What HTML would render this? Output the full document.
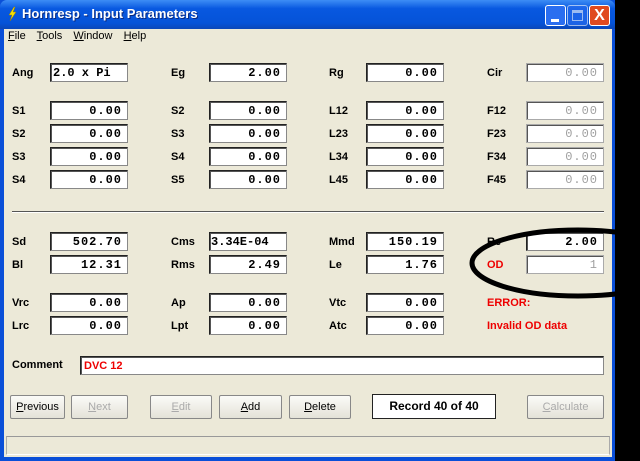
<!DOCTYPE html><html><head><style>
*{margin:0;padding:0;box-sizing:border-box}
body{width:640px;height:461px;background:#000;position:relative;overflow:hidden;font-family:"Liberation Sans",sans-serif}
.win{position:absolute;left:0;top:0;width:615px;height:461px;background:#0a4fd8;}
.title{position:absolute;left:0;top:0;width:615px;height:29px;background:linear-gradient(#3d8df5,#0858e0 30%,#0553d8 80%,#0a47b8);border-radius:7px 7px 0 0}
.title span{position:absolute;left:22px;top:6px;color:#fff;font-weight:bold;font-size:13px;text-shadow:1px 1px #0a2a80}
.body{position:absolute;left:4px;top:29px;width:608px;height:428px;background:#ece9d8}
.menu{position:absolute;left:8px;top:30px;font-size:11px}
.menu span{margin-right:8px}
.l{position:absolute;font-weight:bold;font-size:11px;color:#000;white-space:nowrap}
.b{position:absolute;width:78px;height:19px;background:#fff;border:1px solid #222;border-right-color:#888;border-bottom-color:#888;box-shadow:inset 1px 1px #555;font-family:"Liberation Mono",monospace;font-weight:bold;font-size:12px;text-align:right;padding:1px 5px 0 0;letter-spacing:1px;line-height:16px;white-space:nowrap;overflow:hidden}
.g{color:#a0a0a0;font-weight:normal;border-color:#aaa}
.btn{position:absolute;top:395px;height:24px;border:1px solid #888;border-radius:2px;background:linear-gradient(#fbfbf8,#e4e2d8);font-size:11px;text-align:center;line-height:22px;color:#000}
.dis{color:#aaa}
.red{color:#e00}
</style></head><body>
<div class="win"></div>
<div class="title"><span>Hornresp - Input Parameters</span>
<svg style="position:absolute;left:6px;top:6px" width="12" height="16"><path d="M8 1 L3 9 L6 9 L4 15 L10 6 L7 6 L9 1Z" fill="#f5e000" stroke="#a08000" stroke-width=".5"/></svg>
<div style="position:absolute;left:545px;top:5px;width:21px;height:21px;background:#2a6ef0;border:1px solid #fff;border-radius:3px"><div style="position:absolute;left:5px;top:13px;width:8px;height:3px;background:#fff"></div></div>
<div style="position:absolute;left:567px;top:5px;width:21px;height:21px;background:#2a6ef0;border:1px solid #fff;border-radius:3px;opacity:.6"><div style="position:absolute;left:4px;top:4px;width:11px;height:11px;border:1px solid #fff;border-top-width:3px"></div></div>
<div style="position:absolute;left:589px;top:5px;width:21px;height:21px;background:#e04a20;border:1px solid #fff;border-radius:3px;color:#fff;font-weight:bold;font-size:16px;text-align:center;line-height:19px">X</div>
</div>
<div class="body"></div>
<div class="menu"><span><u>F</u>ile</span> <span><u>T</u>ools</span> <span><u>W</u>indow</span> <span><u>H</u>elp</span></div>

<div class="l" style="left:12px;top:67px">Ang</div><div class="b" style="left:50px;top:63px;text-align:left;padding-left:2px;letter-spacing:0">2.0 x Pi</div>
<div class="l" style="left:171px;top:67px">Eg</div><div class="b" style="left:209px;top:63px">2.00</div>
<div class="l" style="left:329px;top:67px">Rg</div><div class="b" style="left:366px;top:63px">0.00</div>
<div class="l" style="left:487px;top:67px">Cir</div><div class="b g" style="left:526px;top:63px">0.00</div>

<div class="l" style="left:12px;top:105px">S1</div><div class="b" style="left:50px;top:101px">0.00</div>
<div class="l" style="left:171px;top:105px">S2</div><div class="b" style="left:209px;top:101px">0.00</div>
<div class="l" style="left:329px;top:105px">L12</div><div class="b" style="left:366px;top:101px">0.00</div>
<div class="l" style="left:487px;top:105px">F12</div><div class="b g" style="left:526px;top:101px">0.00</div>

<div class="l" style="left:12px;top:128px">S2</div><div class="b" style="left:50px;top:124px">0.00</div>
<div class="l" style="left:171px;top:128px">S3</div><div class="b" style="left:209px;top:124px">0.00</div>
<div class="l" style="left:329px;top:128px">L23</div><div class="b" style="left:366px;top:124px">0.00</div>
<div class="l" style="left:487px;top:128px">F23</div><div class="b g" style="left:526px;top:124px">0.00</div>

<div class="l" style="left:12px;top:151px">S3</div><div class="b" style="left:50px;top:147px">0.00</div>
<div class="l" style="left:171px;top:151px">S4</div><div class="b" style="left:209px;top:147px">0.00</div>
<div class="l" style="left:329px;top:151px">L34</div><div class="b" style="left:366px;top:147px">0.00</div>
<div class="l" style="left:487px;top:151px">F34</div><div class="b g" style="left:526px;top:147px">0.00</div>

<div class="l" style="left:12px;top:174px">S4</div><div class="b" style="left:50px;top:170px">0.00</div>
<div class="l" style="left:171px;top:174px">S5</div><div class="b" style="left:209px;top:170px">0.00</div>
<div class="l" style="left:329px;top:174px">L45</div><div class="b" style="left:366px;top:170px">0.00</div>
<div class="l" style="left:487px;top:174px">F45</div><div class="b g" style="left:526px;top:170px">0.00</div>

<div style="position:absolute;left:12px;top:211px;width:592px;height:2px;border-top:1px solid #555;border-bottom:1px solid #fff"></div>

<div class="l" style="left:12px;top:236px">Sd</div><div class="b" style="left:50px;top:232px">502.70</div>
<div class="l" style="left:171px;top:236px">Cms</div><div class="b" style="left:209px;top:232px;text-align:left;padding-left:1px;letter-spacing:0">3.34E-04</div>
<div class="l" style="left:329px;top:236px">Mmd</div><div class="b" style="left:366px;top:232px">150.19</div>
<div class="l" style="left:487px;top:236px">Re</div><div class="b" style="left:526px;top:232px">2.00</div>

<div class="l" style="left:12px;top:259px">Bl</div><div class="b" style="left:50px;top:255px">12.31</div>
<div class="l" style="left:171px;top:259px">Rms</div><div class="b" style="left:209px;top:255px">2.49</div>
<div class="l" style="left:329px;top:259px">Le</div><div class="b" style="left:366px;top:255px">1.76</div>
<div class="l red" style="left:487px;top:259px">OD</div><div class="b g" style="left:526px;top:255px">1</div>

<div class="l" style="left:12px;top:297px">Vrc</div><div class="b" style="left:50px;top:293px">0.00</div>
<div class="l" style="left:171px;top:297px">Ap</div><div class="b" style="left:209px;top:293px">0.00</div>
<div class="l" style="left:329px;top:297px">Vtc</div><div class="b" style="left:366px;top:293px">0.00</div>
<div class="l red" style="left:487px;top:297px">ERROR:</div>

<div class="l" style="left:12px;top:320px">Lrc</div><div class="b" style="left:50px;top:316px">0.00</div>
<div class="l" style="left:171px;top:320px">Lpt</div><div class="b" style="left:209px;top:316px">0.00</div>
<div class="l" style="left:329px;top:320px">Atc</div><div class="b" style="left:366px;top:316px">0.00</div>
<div class="l red" style="left:487px;top:320px">Invalid OD data</div>

<div class="l" style="left:12px;top:359px">Comment</div>
<div class="b" style="left:80px;top:356px;width:524px;text-align:left;padding-left:3px;font-family:'Liberation Sans',sans-serif;font-size:11px;color:#e00;letter-spacing:0">DVC 12</div>

<div class="btn" style="left:10px;width:55px"><u>P</u>revious</div>
<div class="btn dis" style="left:71px;width:57px"><u>N</u>ext</div>
<div class="btn dis" style="left:150px;width:62px"><u>E</u>dit</div>
<div class="btn" style="left:219px;width:63px"><u>A</u>dd</div>
<div class="btn" style="left:289px;width:62px"><u>D</u>elete</div>
<div style="position:absolute;left:372px;top:394px;width:124px;height:25px;background:#fff;border:1px solid #222;font-weight:bold;font-size:12px;text-align:center;line-height:23px">Record 40 of 40</div>
<div class="btn dis" style="left:527px;width:77px"><u>C</u>alculate</div>

<div style="position:absolute;left:6px;top:436px;width:604px;height:19px;border:1px solid #aaa;border-top-color:#999;border-bottom-color:#fff"></div>

<svg style="position:absolute;left:0;top:0" width="640" height="461"><ellipse cx="578" cy="263" rx="106" ry="33" fill="none" stroke="#000" stroke-width="5"/></svg>
</body></html>
